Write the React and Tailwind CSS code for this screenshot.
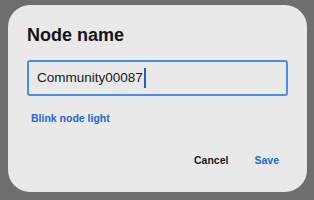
export default function App() {
    return (
        <div
            className="w-[314px] h-[200px] bg-[#6e6e6e] pt-[5px] pl-[8px] overflow-hidden"
            style={{fontFamily: '"Liberation Sans", Arial, sans-serif'}}
        >
            <div className="w-[299px] h-[187px] bg-[#e9e9e9] rounded-[22px] pt-[19px] px-[19px] flex flex-col">
                <h1 className="text-[18px] leading-[22px] font-bold text-[#141414]">Node name</h1>

                <div className="mt-[14px] w-[261px] h-[36px] border-2 border-[#4a8fdc] rounded-[3px] flex items-center pl-[8px]">
                    <span className="text-[13.5px] text-[#1a1a1a]">Community00087</span>
                    <span className="w-[2px] h-[20px] bg-[#1f62c9] ml-[1px]"></span>
                </div>

                <button className="mt-[16px] ml-[4px] self-start text-[10.5px] leading-[13px] font-bold text-[#1c6bd4]">
                    Blink node light
                </button>

                <div className="mt-[29px] flex justify-end pr-[9px] gap-[26px]">
                    <button className="text-[10.5px] leading-[13px] font-bold text-[#1a1a1a]">Cancel</button>
                    <button className="text-[10.5px] leading-[13px] font-bold text-[#1c6bd4]">Save</button>
                </div>
            </div>
        </div>
    )
}
